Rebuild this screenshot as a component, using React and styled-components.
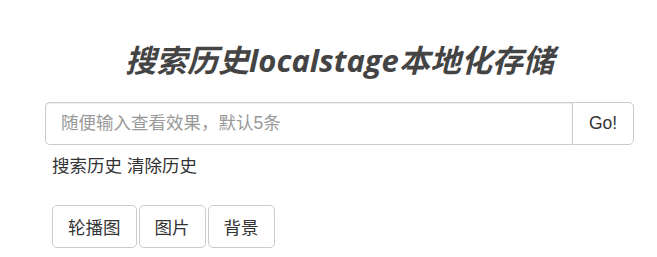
import React, { useState } from 'react'
import styled, { createGlobalStyle } from 'styled-components'

const GlobalStyle = createGlobalStyle`
  body {
    margin: 0;
    background: #fff;
    font-family: "Liberation Sans", "Noto Sans CJK SC", sans-serif;
    font-size: 17.5px;
    color: #333;
  }
`

const Page = styled.div`
  padding: 0 23px 0 45px;
`

const Title = styled.h2`
  margin: 43px 0 25px;
  text-align: center;
  font-family: "Open Sans", "Noto Sans CJK SC", sans-serif;
  font-size: 31px;
  line-height: 34px;
  font-weight: 700;
  font-style: italic;
  color: #444;
`

const InputGroup = styled.div`
  display: flex;
  height: 43px;
`

const SearchInput = styled.input`
  flex: 1;
  min-width: 0;
  box-sizing: border-box;
  height: 43px;
  padding: 0 15px;
  border: 1px solid #ccc;
  border-right: none;
  border-radius: 5px 0 0 5px;
  font: inherit;
  color: #555;
  outline: none;
  box-shadow: inset 0 1px 1px rgba(0, 0, 0, 0.075);
  &::placeholder {
    color: #999;
  }
`

const GoButton = styled.button`
  box-sizing: border-box;
  width: 62px;
  height: 43px;
  border: 1px solid #ccc;
  border-radius: 0 5px 5px 0;
  background: #fff;
  font: inherit;
  color: #333;
  cursor: pointer;
`

const History = styled.div`
  margin-top: 9px;
  padding-left: 7px;
  line-height: 25px;
  span {
    margin-right: 5px;
    cursor: pointer;
  }
`

const Tabs = styled.div`
  display: flex;
  gap: 2px;
  margin-top: 26px;
  padding-left: 7px;
`

const TabButton = styled.button`
  box-sizing: border-box;
  height: 43px;
  padding: 0 15px;
  border: 1px solid ${p => (p.active ? '#adadad' : '#ccc')};
  border-radius: 5px;
  background: ${p => (p.active ? '#e6e6e6' : '#fff')};
  font: inherit;
  color: #333;
  cursor: pointer;
`

function App() {
  const [tab, setTab] = useState(null)
  const tabs = ['轮播图', '图片', '背景']
  return (
    <Page>
      <GlobalStyle />
      <Title>搜索历史localstage本地化存储</Title>
      <InputGroup>
        <SearchInput placeholder="随便输入查看效果，默认5条" />
        <GoButton>Go!</GoButton>
      </InputGroup>
      <History>
        <span>搜索历史</span>
        <span>清除历史</span>
      </History>
      <Tabs>
        {tabs.map(t => (
          <TabButton key={t} active={tab === t} onClick={() => setTab(t)}>
            {t}
          </TabButton>
        ))}
      </Tabs>
    </Page>
  )
}

export default App
